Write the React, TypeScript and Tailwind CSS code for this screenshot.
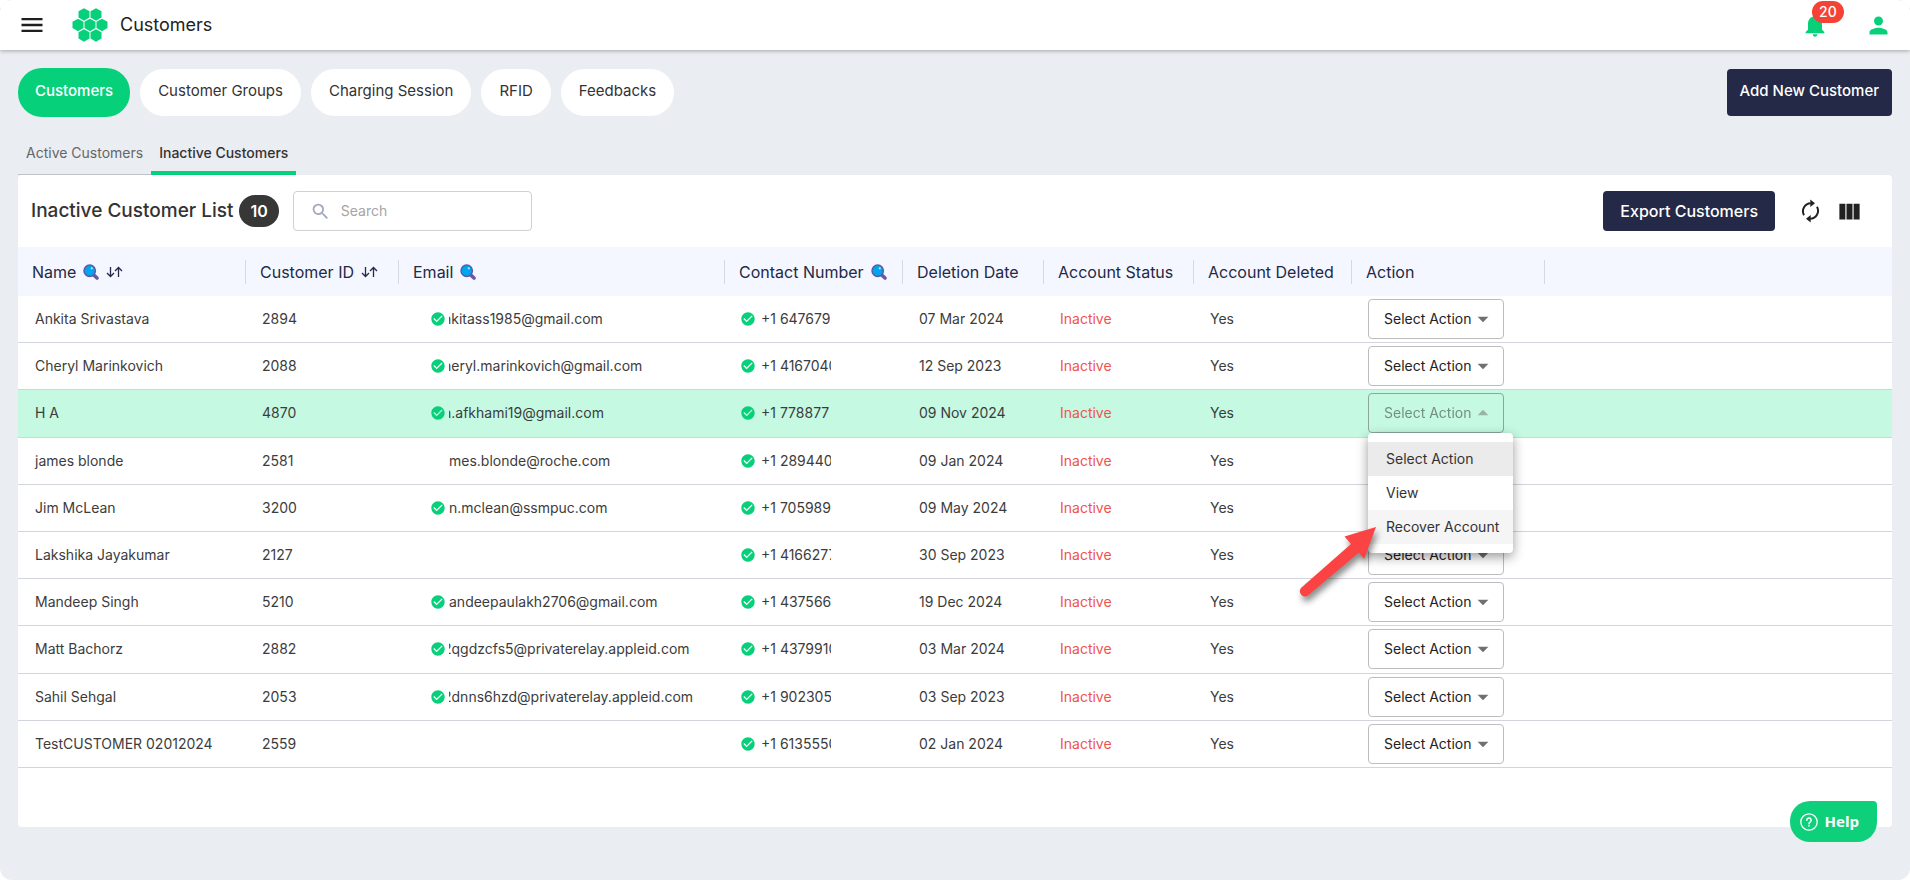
import { useState } from "react";
import {
  MdArrowDropDown,
  MdArrowDropUp,
  MdCheckCircle,
  MdMenu,
  MdNotifications,
  MdPerson,
  MdSearch,
  MdViewColumn,
} from "react-icons/md";

interface Customer {
  id: string;
  name: string;
  email?: string;
  emailVerified?: boolean;
  masked?: boolean;
  phone: string;
  deleted: string;
}

const customers: Customer[] = [
  { id: "2894", name: "Ankita Srivastava", email: "nkitass1985@gmail.com", emailVerified: true, masked: true, phone: "+1 647679", deleted: "07 Mar 2024" },
  { id: "2088", name: "Cheryl Marinkovich", email: "heryl.marinkovich@gmail.com", emailVerified: true, masked: true, phone: "+1 4167040", deleted: "12 Sep 2023" },
  { id: "4870", name: "H A", email: "h.afkhami19@gmail.com", emailVerified: true, masked: true, phone: "+1 778877", deleted: "09 Nov 2024" },
  { id: "2581", name: "james blonde", email: "mes.blonde@roche.com", phone: "+1 289440", deleted: "09 Jan 2024" },
  { id: "3200", name: "Jim McLean", email: "n.mclean@ssmpuc.com", emailVerified: true, phone: "+1 705989", deleted: "09 May 2024" },
  { id: "2127", name: "Lakshika Jayakumar", phone: "+1 4166277", deleted: "30 Sep 2023" },
  { id: "5210", name: "Mandeep Singh", email: "andeepaulakh2706@gmail.com", emailVerified: true, phone: "+1 437566", deleted: "19 Dec 2024" },
  { id: "2882", name: "Matt Bachorz", email: "2qgdzcfs5@privaterelay.appleid.com", emailVerified: true, masked: true, phone: "+1 4379910", deleted: "03 Mar 2024" },
  { id: "2053", name: "Sahil Sehgal", email: "2dnns6hzd@privaterelay.appleid.com", emailVerified: true, masked: true, phone: "+1 902305", deleted: "03 Sep 2023" },
  { id: "2559", name: "TestCUSTOMER 02012024", phone: "+1 6135550", deleted: "02 Jan 2024" },
];

const columns = [
  { label: "Name", width: "w-[228px]", search: true, sort: true },
  { label: "Customer ID", width: "w-[153px]", sort: true },
  { label: "Email", width: "w-[326px]", search: true },
  { label: "Contact Number", width: "w-[178px]", search: true },
  { label: "Deletion Date", width: "w-[141px]" },
  { label: "Account Status", width: "w-[150px]" },
  { label: "Account Deleted", width: "w-[158px]" },
  { label: "Action", width: "w-[193px]" },
];

const sections = ["Customer Groups", "Charging Session", "RFID", "Feedbacks"];
const actions = ["Select Action", "View", "Recover Account"];

function Logo() {
  const cells = [
    [12, 6.5],
    [24, 6.5],
    [6, 17],
    [18, 17],
    [30, 17],
    [12, 27.5],
    [24, 27.5],
  ];
  return (
    <svg width="36" height="34" viewBox="0 0 36 34" fill="#06d07a">
      {cells.map(([x, y]) => (
        <path key={`${x}-${y}`} d={`M${x} ${y - 6.3}l5.5 3.1v6.3l-5.5 3.1l-5.5-3.1v-6.3z`} />
      ))}
    </svg>
  );
}

function Magnifier() {
  return (
    <svg width="16" height="16" viewBox="0 0 16 16" aria-hidden="true">
      <path d="M9.8 10.2l4.2 3.8" stroke="#6b57a5" strokeWidth="3.6" strokeLinecap="round" />
      <circle cx="6.7" cy="6.7" r="5.7" fill="#00a6ed" stroke="#5c5aa8" strokeWidth="1.5" />
      <circle cx="8.8" cy="4.3" r="1.1" fill="#b9e8ff" />
    </svg>
  );
}

function SortArrows() {
  return (
    <svg width="17" height="12" viewBox="0 0 17 12" fill="none" stroke="#232946" strokeWidth="1.3" aria-hidden="true">
      <path d="M4.5 1v9.5M1 7l3.5 3.5L8 7" />
      <path d="M12.5 11V1.5M9 5l3.5-3.5L16 5" />
    </svg>
  );
}

function RefreshIcon() {
  return (
    <svg width="19" height="24" viewBox="0 0 19 24" fill="none" stroke="#222" strokeWidth="2">
      <path d="M3 16.2A8 8 0 0 1 9.8 4.3" />
      <path d="M16 7.8A8 8 0 0 1 9.2 19.7" />
      <path d="M9.3 .5v7.6l4.7-3.8zM9.7 15.9v7.6L5 19.7z" fill="#222" stroke="none" />
    </svg>
  );
}

function ActionSelect({ name, open }: { name: string; open?: boolean }) {
  return (
    <div className={`relative h-10 w-[136px] ${open ? "opacity-50" : ""}`}>
      <select
        aria-label={`Action for ${name}`}
        className={`h-10 w-full appearance-none rounded border pl-[15px] text-sm text-[#222] ${open ? "border-[#555] bg-transparent" : "border-[#bdbdbd] bg-white"}`}
      >
        {actions.map((a) => (
          <option key={a}>{a}</option>
        ))}
      </select>
      <span className="pointer-events-none absolute top-[7px] right-2 text-[26px] text-[#707070]">
        {open ? <MdArrowDropUp /> : <MdArrowDropDown />}
      </span>
    </div>
  );
}

function ActionMenu() {
  return (
    <ul
      role="listbox"
      aria-label="Actions"
      className="absolute top-full left-0 z-10 w-[145px] rounded bg-white py-[9px] text-sm text-[#333] shadow-[0_4px_12px_rgba(0,0,0,0.4)]"
    >
      <li role="option" aria-selected="true" className="bg-[#ebebeb] pl-[18px] leading-[34px]">Select Action</li>
      <li role="option" aria-selected="false" className="pl-[18px] leading-[34px]">View</li>
      <li role="option" aria-selected="false" className="bg-[#f5f5f5] pl-[18px] leading-[34px]">Recover Account</li>
      <svg className="absolute top-[86px] left-[-72px] overflow-visible drop-shadow-[2px_5px_3px_rgba(0,0,0,0.45)]" width="80" height="80" viewBox="0 0 80 80" fill="#fc4343">
        <path d="M80 8L68 40l-5-6.5L12.5 76a5 5 0 0 1-7-7.5L55 25l-6.500-7.500z" />
      </svg>
    </ul>
  );
}

function CustomerRow({ customer, active }: { customer: Customer; active: boolean }) {
  return (
    <tr className={`border-b border-[#d3d5dc] ${active ? "bg-[#c5f9e2]" : ""}`}>
      <td className="pl-[17px]">{customer.name}</td>
      <td className="pl-4">{customer.id}</td>
      <td className="pl-[31px]">
        <div className="flex items-center gap-[3px]">
          <span className="w-4 text-base text-[#06d07a]">{customer.emailVerified && <MdCheckCircle />}</span>
          {customer.email && (
            <span className="overflow-hidden">
              <span className={`block ${customer.masked ? "-ml-1.5" : ""}`}>{customer.email}</span>
            </span>
          )}
        </div>
      </td>
      <td className="pl-[15px]">
        <div className="flex items-center gap-[5px]">
          <MdCheckCircle className="text-base text-[#06d07a]" />
          <span className="max-w-[70px] overflow-hidden whitespace-nowrap">{customer.phone}</span>
        </div>
      </td>
      <td className="pl-4">{customer.deleted}</td>
      <td className="pl-4 text-[#ef5350]">Inactive</td>
      <td className="pl-4">Yes</td>
      <td className="pl-4">
        <div className="relative w-[136px]">
          <ActionSelect name={customer.name} open={active} />
          {active && <ActionMenu />}
        </div>
      </td>
      <td />
    </tr>
  );
}

export default function App() {
  const [openId] = useState("4870");

  return (
    <div className="min-h-screen overflow-hidden rounded-xl bg-[#eaedf2] font-['Inter',sans-serif] text-[#333]">
      <header className="flex h-[50px] items-center bg-white px-[18px] shadow-[0_1px_4px_rgba(0,0,0,0.3)]">
        <button aria-label="Menu" className="text-[28px] text-[#1f1f1f]"><MdMenu /></button>
        <div className="ml-[26px]"><Logo /></div>
        <h1 className="ml-3 text-lg text-[#222]">Customers</h1>
        <button aria-label="Notifications" className="relative ml-auto text-[28px] text-[#06d07a]">
          <MdNotifications />
          <span className="absolute -top-2.5 left-[11px] rounded-full bg-[#f44336] px-[7px] text-sm leading-[22px] font-medium text-white">20</span>
        </button>
        <button aria-label="Account" className="ml-9 text-[27px] text-[#06d07a]"><MdPerson /></button>
      </header>

      <main className="px-[18px]">
        <div className="flex items-center justify-between pt-[18px]">
          <nav className="flex items-center gap-2.5 text-[15px]">
            <a href="#customers" className="h-[49px] rounded-3xl bg-[#06d07a] px-[17px] leading-[46px] font-medium text-white">Customers</a>
            {sections.map((s) => (
              <a key={s} href={`#${s}`} className="h-[47px] rounded-3xl bg-white px-[18px] leading-[44px]">{s}</a>
            ))}
          </nav>
          <button className="h-[47px] rounded bg-[#232946] px-[13px] pb-[3px] text-[15px] font-medium text-white">Add New Customer</button>
        </div>

        <nav className="mt-4 flex h-[42px] items-stretch text-sm leading-[40px]">
          <a href="#active" className="border-b border-[#bfc3ca] px-2 text-[#666]">Active Customers</a>
          <a href="#inactive" className="border-b-4 border-[#06d07a] px-2 font-medium">Inactive Customers</a>
        </nav>

        <section className="rounded bg-white pb-[59px]">
          <div className="flex items-center px-[13px] py-4">
            <h2 className="text-[19px] font-medium">Inactive Customer List</h2>
            <span className="ml-1.5 rounded-full bg-[#373737] px-[11px] text-base leading-8 font-semibold text-white">10</span>
            <label className="ml-3.5 flex h-10 w-[239px] items-center gap-2.5 rounded border border-[#d0d0d0] pl-4">
              <MdSearch className="text-[21px] text-[#a3a7bb]" />
              <input aria-label="Search" placeholder="Search" className="w-40 text-sm outline-none placeholder:text-[#a5a5a5]" />
            </label>
            <button className="ml-auto h-10 rounded bg-[#232946] px-[17px] text-base font-medium text-white">Export Customers</button>
            <button aria-label="Refresh" className="ml-[26px]"><RefreshIcon /></button>
            <button aria-label="Columns" className="mr-4 ml-4 text-[27px] text-[#222]"><MdViewColumn /></button>
          </div>

          <table className="h-[521px] w-full table-fixed text-left text-sm">
            <thead className="text-base text-[#232946]">
              <tr className="h-[49px] bg-[#f4f7ff]">
                {columns.map((c) => (
                  <th key={c.label} className={`p-0 font-normal ${c.width}`}>
                    <div className="flex h-6 items-center border-r border-[#d5d9e3] pl-[14px] whitespace-nowrap">
                      {c.label}
                      {c.search && <button aria-label={`Search ${c.label}`} className="ml-[7px]"><Magnifier /></button>}
                      {c.sort && <button aria-label={`Sort ${c.label}`} className="ml-[7px]"><SortArrows /></button>}
                    </div>
                  </th>
                ))}
                <th />
              </tr>
            </thead>
            <tbody className="text-[#3c3c3c]">
              {customers.map((c) => (
                <CustomerRow key={c.id} customer={c} active={c.id === openId} />
              ))}
            </tbody>
          </table>
        </section>
      </main>

      <button className="fixed right-[33px] bottom-[38px] flex h-[41px] items-center gap-[7px] rounded-[20px] rounded-tr bg-[#0fd07a] pr-[18px] pl-2.5 font-['Open_Sans',sans-serif] text-[15px] font-bold text-white">
        <svg width="18" height="18" viewBox="0 0 18 18" fill="none" stroke="currentColor" strokeWidth="1.3" strokeLinecap="round">
          <circle cx="9" cy="9" r="8.2" />
          <path d="M6.8 7.2a2.2 2.2 0 1 1 3.3 1.9c-.8.5-1.1.8-1.1 1.6M9 12.9v.1" strokeWidth="1.6" />
        </svg>
        Help
      </button>
    </div>
  );
}
